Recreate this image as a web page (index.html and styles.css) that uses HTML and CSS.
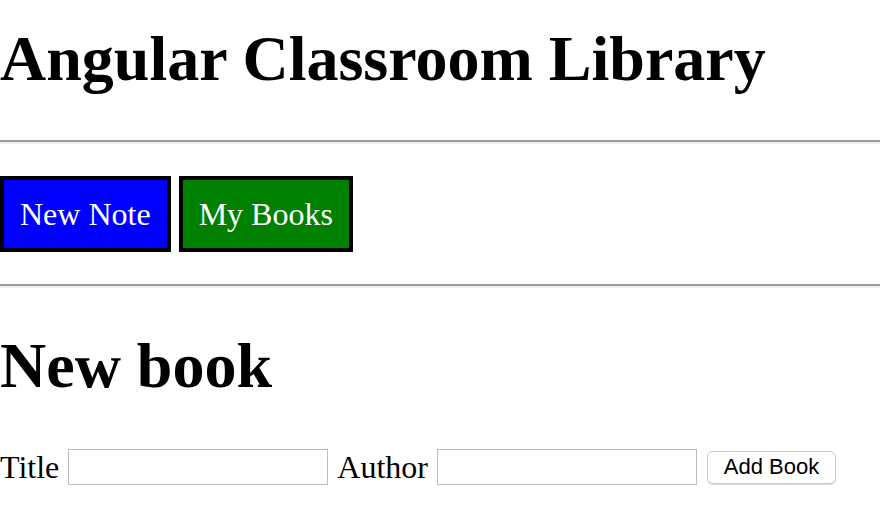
FILE: index.html
```html
<!DOCTYPE html>
<html>
<head>
<meta charset="utf-8">
<title>Angular Classroom Library</title>
<link rel="stylesheet" href="styles.css">
</head>
<body>
<h1 class="title">Angular Classroom Library</h1>
<hr class="rule">
<nav class="nav">
  <button class="nav-btn nav-btn-blue">New Note</button>
  <button class="nav-btn nav-btn-green">My Books</button>
</nav>
<hr class="rule">
<h2 class="subtitle">New book</h2>
<form class="book-form">
  <label class="field-label" for="title">Title</label>
  <input class="field-input" id="title" type="text">
  <label class="field-label" for="author">Author</label>
  <input class="field-input" id="author" type="text">
  <button class="add-btn" type="button">Add Book</button>
</form>
</body>
</html>
```

FILE: styles.css
```css
html, body {
  margin: 0;
  padding: 0;
  background: #ffffff;
}
body {
  font-family: "Liberation Serif", "Times New Roman", serif;
  font-size: 32px;
  color: #000000;
}
.title {
  font-size: 64px;
  font-weight: bold;
  line-height: 74px;
  margin: 22px 0 44px;
}
.rule {
  margin: 0;
  height: 0;
  border: 0;
  border-top: 2px solid #9b9b9b;
  border-bottom: 2px solid #eeeeee;
}
.nav {
  display: flex;
  gap: 8px;
  padding: 32px 0;
}
.nav-btn {
  font-family: "Liberation Serif", "Times New Roman", serif;
  font-size: 32px;
  line-height: 36px;
  color: #ffffff;
  border: 4px solid #000000;
  padding: 16px 16px;
  margin: 0;
  border-radius: 0;
}
.nav-btn-blue {
  background: #0000ff;
}
.nav-btn-green {
  background: #008000;
}
.subtitle {
  font-size: 64px;
  font-weight: bold;
  line-height: 74px;
  margin: 41px 0 46px;
}
.book-form {
  display: flex;
  align-items: center;
  gap: 9px;
  height: 36px;
}
.field-label {
  font-size: 32px;
  line-height: 36px;
}
.field-input {
  box-sizing: border-box;
  width: 260px;
  height: 36px;
  margin: 0;
  border: 1px solid #bdbdbd;
  padding: 2px 4px;
  font-size: 20px;
}
.add-btn {
  box-sizing: border-box;
  margin-left: 1px;
  width: 129px;
  height: 33px;
  padding: 0;
  font-family: "Liberation Sans", Arial, sans-serif;
  font-size: 22px;
  color: #000000;
  background: #ffffff;
  border: 1px solid #c9c9c9;
  border-radius: 6px;
  box-shadow: 0 1px 1px rgba(0, 0, 0, 0.15);
}
```
